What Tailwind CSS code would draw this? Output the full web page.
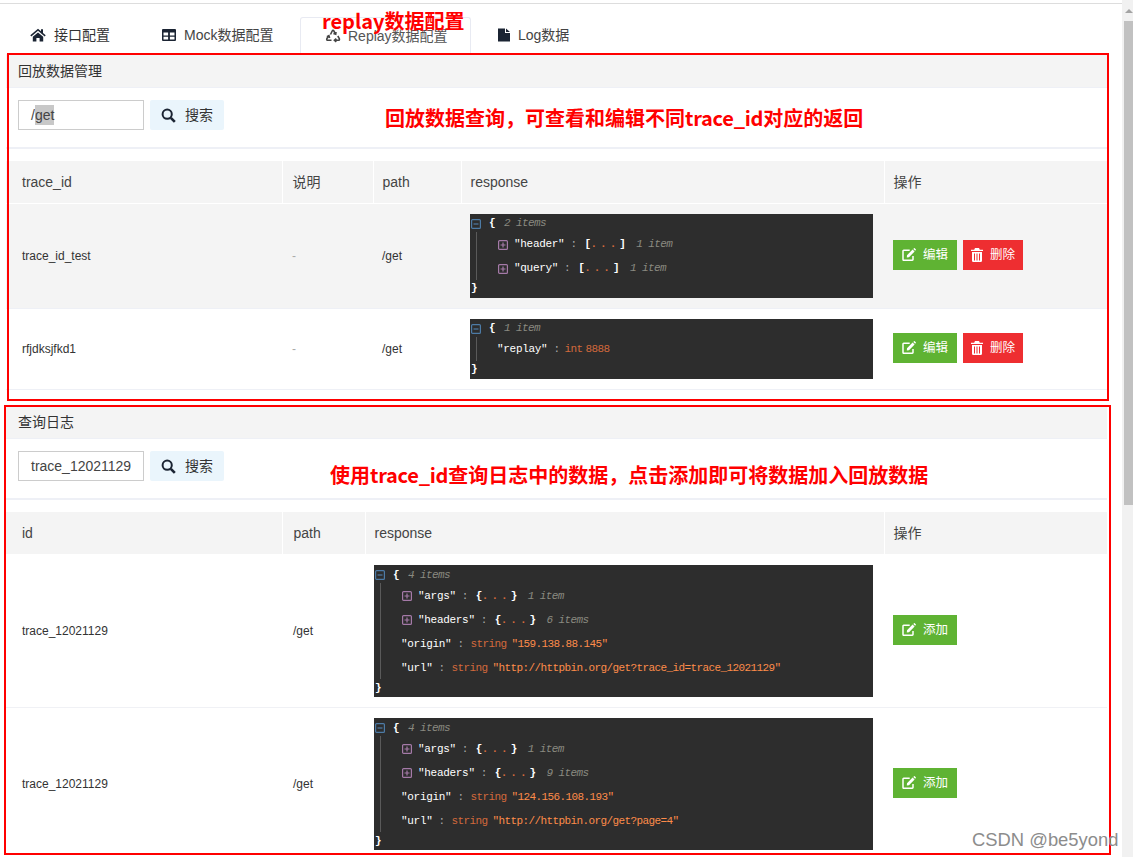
<!DOCTYPE html>
<html lang="en">
<head>
    <meta charset="UTF-8">
    <title>Replay数据配置</title>
    <script src="https://cdn.jsdelivr.net/npm/@tailwindcss/browser@4"></script>
</head>
<body class="relative w-[1133px] h-[857px] overflow-hidden bg-white text-[#333] font-['Liberation_Sans','Noto_Sans_CJK_SC',sans-serif]">

    <div class="flex h-full">
        <!-- Page -->
        <div class="w-[1122px] pt-[3px] pl-[6px] pr-[15px]">
            <div class="h-px -ml-[6px] -mr-[15px] bg-[#ddd]"></div>

            <!-- Tabs -->
            <div class="flex gap-[3px] pt-[13px] text-sm whitespace-nowrap">
                <div class="h-9 w-[129px] pl-6 flex items-center gap-2 text-[#333]">
                    <svg class="w-4 h-4 shrink-0 text-[#1b2433]" viewBox="0 0 16 14"><path fill="currentColor" d="M8 .8.3 7.2l1 1.2L8 2.800l6.700 5.600 1-1.200L13 5V1.300h-2v2zM2.800 8.800 8 4.500l5.200 4.300v4.700H9.600V10H6.400v3.500H2.800z"/></svg>
                    <span>接口配置</span>
                </div>
                <div class="h-9 w-[159px] pl-6 flex items-center gap-2 text-[#444]">
                    <svg class="w-[14px] h-[14px] shrink-0" viewBox="0 0 14 14"><path fill="#1b2433" fill-rule="evenodd" d="M1 1h12a1 1 0 0 1 1 1v10a1 1 0 0 1-1 1H1a1 1 0 0 1-1-1V2a1 1 0 0 1 1-1zM1.500 4.600v2.900h4.600V4.600zm6.400 0v2.900h4.600V4.600zM1.500 8.700v2.800h4.600V8.700zm6.400 0v2.800h4.600V8.700z"/></svg>
                    <span>Mock数据配置</span>
                </div>
                <div class="h-9 w-[171px] pl-6 flex items-center gap-[7px] bg-white border border-b-0 border-[#e8eaf2] rounded-t-[3px] text-[#555]">
                    <svg class="w-4 h-4 shrink-0" viewBox="0 0 16 16" fill="none" stroke="#444" stroke-width="1.6"><path d="M5.500 6.500 7.200 3c.4-.8 1.300-.8 1.700 0l1.600 2.800M11 3.800l-.3 2.400-2.300-.6M12.800 8l1.500 2.700c.4.8 0 1.600-.9 1.600h-3M11.300 10.600l-1.900 1.700 1.900 1.600M6.500 12.300H2.800c-.9 0-1.300-.8-.9-1.600L3.400 8M1.900 8.700l2-1 .7 2.300"/></svg>
                    <span>Replay数据配置</span>
                </div>
                <div class="h-9 pl-6 flex items-center gap-2 text-[#444]">
                    <svg class="w-3 h-[14px] shrink-0" viewBox="0 0 12 14"><path fill="#1b2433" d="M0 .5h7V5h5v8.500H0zM8 .5 12 4H8z"/></svg>
                    <span>Log数据</span>
                </div>
            </div>

            <!-- Replay data panel -->
            <section class="mt-px h-[336px]">
                <div class="h-[34px] flex items-center pl-3 bg-[#f4f4f4] border-b border-[#eef0f6] text-sm text-[#333]">回放数据管理</div>
                <div class="h-[61px] flex items-start gap-[6px] pl-3 pt-3 border-b-2 border-[#eef0f6]">
                    <div class="w-[126px] h-[30px] border border-[#ccc] pl-3 flex items-center text-sm text-[#444]">/<span class="bg-[#c8c8c8]">get</span></div>
                    <div class="w-[74px] h-[30px] rounded-[2px] bg-[#eaf5fc] flex items-center gap-[9px] pl-[11px] text-sm">
                        <svg class="w-[15px] h-[15px]" viewBox="0 0 15 15" fill="none" stroke="#1b2433"><circle cx="6.200" cy="6.200" r="4.600" stroke-width="2"/><path d="m9.800 9.800 4 4" stroke-width="2.600"/></svg>
                        <span>搜索</span>
                    </div>
                </div>
                <table class="mt-3 w-full table-fixed text-[12px]">
                    <colgroup><col class="w-[276px]"><col class="w-[91px]"><col class="w-[88px]"><col class="w-[423px]"><col></colgroup>
                    <thead>
                        <tr class="h-[42px] bg-[#f4f4f4] text-left text-sm text-[#444]">
                            <th class="pl-4 font-normal border-r border-white">trace_id</th>
                            <th class="pl-[10px] font-normal border-r border-white">说明</th>
                            <th class="pl-[9px] font-normal border-r border-white">path</th>
                            <th class="pl-[9px] font-normal border-r border-white">response</th>
                            <th class="pl-[9px] font-normal">操作</th>
                        </tr>
                    </thead>
                    <tbody>
                        <tr class="h-[105px] bg-[#f4f4f4] border-t border-white border-b border-b-[#eef0f6]">
                            <td class="pl-4">trace_id_test</td>
                            <td class="pl-[10px] text-[#aaa]">-</td>
                            <td class="pl-[9px]">/get</td>
                            <td class="pl-[9px]">
                                <div class="relative w-[403px] h-[84px] bg-[#2d2d2d] font-['Liberation_Mono',monospace] text-[11px] tracking-[-0.6px] text-white">
                                    <div class="absolute left-[6px] top-[18px] w-px h-[48px] bg-[#5a5a5a]"></div>
                                    <div class="h-[18px] pt-[2px] flex items-center pl-px"><svg class="w-[10px] h-[10px]" viewBox="0 0 10 10" fill="none" stroke="#4d7ba6" stroke-width="1.200"><rect x=".6" y=".6" width="8.800" height="8.800" rx="1"/><path d="M2.500 5h5"/></svg><b class="ml-2">{</b><i class="ml-[9px] text-[#8a8a80]">2 items</i></div>
                                    <div class="h-6 pt-[2px] flex items-center pl-7"><svg class="w-[10px] h-[10px]" viewBox="0 0 10 10" fill="none" stroke="#a57aa8" stroke-width="1.200"><rect x=".6" y=".6" width="8.800" height="8.800" rx="1"/><path d="M2.500 5h5M5 2.500v5"/></svg><span class="ml-[6px] tracking-[-0.3px]">"header"</span><span class="ml-[6px] text-[#aaa]">:</span><b class="ml-2">[</b><b class="text-[#d2693c] tracking-[3px]">...</b><b>]</b><i class="ml-[11px] text-[#8a8a80]">1 item</i></div>
                                    <div class="h-6 pt-[2px] flex items-center pl-7"><svg class="w-[10px] h-[10px]" viewBox="0 0 10 10" fill="none" stroke="#a57aa8" stroke-width="1.200"><rect x=".6" y=".6" width="8.800" height="8.800" rx="1"/><path d="M2.500 5h5M5 2.500v5"/></svg><span class="ml-[6px] tracking-[-0.3px]">"query"</span><span class="ml-[6px] text-[#aaa]">:</span><b class="ml-2">[</b><b class="text-[#d2693c] tracking-[3px]">...</b><b>]</b><i class="ml-[11px] text-[#8a8a80]">1 item</i></div>
                                    <div class="h-[18px] flex items-center pl-px"><b>}</b></div>
                                </div>
                            </td>
                            <td class="pl-[9px]">
                                <div class="-mt-px flex gap-[6px] text-white text-[12.5px]">
                                    <div class="w-16 h-[30px] bg-[#5fb333] flex items-center gap-[7px] pl-[9px]"><svg class="w-[14px] h-[14px]" viewBox="0 0 14 14"><path fill="none" stroke="#fff" stroke-width="1.500" d="M11 8v3.600c0 .4-.3.7-.7.7H1.700a.7.7 0 0 1-.7-.7V3c0-.4.3-.7.7-.7h6"/><path fill="#fff" d="m5 7.200 5.600-5.600 2 2L7 9.200l-2.200.2zM11.300.9l.7-.7c.2-.2.500-.2.700 0l1.100 1.100c.2.2.2.500 0 .700l-.7.7z"/></svg><span>编辑</span></div>
                                    <div class="w-[60px] h-[30px] bg-[#ee2e31] flex items-center gap-[7px] pl-2"><svg class="w-[12px] h-[14px]" viewBox="0 0 12 14"><path fill="#fff" fill-rule="evenodd" d="M4 0h4l.8 1.800H12V3H0V1.800h3.200zM1 4h10v8.800c0 .7-.4 1.200-1 1.200H2c-.6 0-1-.5-1-1.200zm2 1.500v7h1v-7zm2.500 0v7h1v-7zm2.500 0v7h1v-7z"/></svg><span>删除</span></div>
                                </div>
                            </td>
                        </tr>
                        <tr class="h-[81px] border-b border-[#eef0f6]">
                            <td class="pl-4">rfjdksjfkd1</td>
                            <td class="pl-[10px] text-[#aaa]">-</td>
                            <td class="pl-[9px]">/get</td>
                            <td class="pl-[9px]">
                                <div class="relative w-[403px] h-[60px] bg-[#2d2d2d] font-['Liberation_Mono',monospace] text-[11px] tracking-[-0.6px] text-white">
                                    <div class="absolute left-[6px] top-[18px] w-px h-6 bg-[#5a5a5a]"></div>
                                    <div class="h-[18px] pt-[2px] flex items-center pl-px"><svg class="w-[10px] h-[10px]" viewBox="0 0 10 10" fill="none" stroke="#4d7ba6" stroke-width="1.200"><rect x=".6" y=".6" width="8.800" height="8.800" rx="1"/><path d="M2.500 5h5"/></svg><b class="ml-2">{</b><i class="ml-[9px] text-[#8a8a80]">1 item</i></div>
                                    <div class="h-6 pt-[2px] flex items-center pl-[27px]"><span class="tracking-[-0.3px]">"replay"</span><span class="ml-[6px] text-[#aaa]">:</span><span class="ml-[5px] text-[#d2693c]">int</span><span class="ml-[3px] text-[#d2693c]">8888</span></div>
                                    <div class="h-[18px] flex items-center pl-px"><b>}</b></div>
                                </div>
                            </td>
                            <td class="pl-[9px]">
                                <div class="-mt-px flex gap-[6px] text-white text-[12.5px]">
                                    <div class="w-16 h-[30px] bg-[#5fb333] flex items-center gap-[7px] pl-[9px]"><svg class="w-[14px] h-[14px]" viewBox="0 0 14 14"><path fill="none" stroke="#fff" stroke-width="1.500" d="M11 8v3.600c0 .4-.3.7-.7.7H1.700a.7.7 0 0 1-.7-.7V3c0-.4.3-.7.7-.7h6"/><path fill="#fff" d="m5 7.200 5.600-5.600 2 2L7 9.200l-2.200.2zM11.300.9l.7-.7c.2-.2.500-.2.700 0l1.100 1.100c.2.2.2.500 0 .700l-.7.7z"/></svg><span>编辑</span></div>
                                    <div class="w-[60px] h-[30px] bg-[#ee2e31] flex items-center gap-[7px] pl-2"><svg class="w-[12px] h-[14px]" viewBox="0 0 12 14"><path fill="#fff" fill-rule="evenodd" d="M4 0h4l.8 1.800H12V3H0V1.800h3.200zM1 4h10v8.800c0 .7-.4 1.200-1 1.200H2c-.6 0-1-.5-1-1.200zm2 1.500v7h1v-7zm2.500 0v7h1v-7zm2.500 0v7h1v-7z"/></svg><span>删除</span></div>
                                </div>
                            </td>
                        </tr>
                    </tbody>
                </table>
            </section>

            <!-- Log query panel -->
            <section class="mt-4">
                <div class="h-[33px] flex items-center pl-3 bg-[#f4f4f4] border-b border-[#eef0f6] text-sm text-[#333]">查询日志</div>
                <div class="h-[61px] flex items-start gap-[6px] pl-3 pt-3 border-b-2 border-[#eef0f6]">
                    <div class="w-[126px] h-[30px] border border-[#ccc] pl-3 flex items-center text-sm text-[#444]">trace_12021129</div>
                    <div class="w-[74px] h-[30px] rounded-[2px] bg-[#eaf5fc] flex items-center gap-[9px] pl-[11px] text-sm">
                        <svg class="w-[15px] h-[15px]" viewBox="0 0 15 15" fill="none" stroke="#1b2433"><circle cx="6.200" cy="6.200" r="4.600" stroke-width="2"/><path d="m9.800 9.800 4 4" stroke-width="2.600"/></svg>
                        <span>搜索</span>
                    </div>
                </div>
                <table class="mt-3 w-full table-fixed text-[12px]">
                    <colgroup><col class="w-[276px]"><col class="w-[83px]"><col class="w-[519px]"><col></colgroup>
                    <thead>
                        <tr class="h-[42px] bg-[#f4f4f4] text-left text-sm text-[#444]">
                            <th class="pl-4 font-normal border-r border-white">id</th>
                            <th class="pl-[11px] font-normal border-r border-white">path</th>
                            <th class="pl-[9px] font-normal border-r border-white">response</th>
                            <th class="pl-[9px] font-normal">操作</th>
                        </tr>
                    </thead>
                    <tbody>
                        <tr class="h-[153px] border-b border-[#f0f1f5]">
                            <td class="pl-4 pt-[2px]">trace_12021129</td>
                            <td class="pl-[11px] pt-[2px]">/get</td>
                            <td class="pl-[9px] pt-[2px]">
                                <div class="relative w-[499px] h-[132px] bg-[#2d2d2d] font-['Liberation_Mono',monospace] text-[11px] tracking-[-0.6px] text-white">
                                    <div class="absolute left-[6px] top-[18px] w-px h-24 bg-[#5a5a5a]"></div>
                                    <div class="h-[18px] pt-[2px] flex items-center pl-px"><svg class="w-[10px] h-[10px]" viewBox="0 0 10 10" fill="none" stroke="#4d7ba6" stroke-width="1.200"><rect x=".6" y=".6" width="8.800" height="8.800" rx="1"/><path d="M2.500 5h5"/></svg><b class="ml-2">{</b><i class="ml-[9px] text-[#8a8a80]">4 items</i></div>
                                    <div class="h-6 pt-[2px] flex items-center pl-7"><svg class="w-[10px] h-[10px]" viewBox="0 0 10 10" fill="none" stroke="#a57aa8" stroke-width="1.200"><rect x=".6" y=".6" width="8.800" height="8.800" rx="1"/><path d="M2.500 5h5M5 2.500v5"/></svg><span class="ml-[6px] tracking-[-0.3px]">"args"</span><span class="ml-[6px] text-[#aaa]">:</span><b class="ml-2">{</b><b class="text-[#d2693c] tracking-[3px]">...</b><b>}</b><i class="ml-[11px] text-[#8a8a80]">1 item</i></div>
                                    <div class="h-6 pt-[2px] flex items-center pl-7"><svg class="w-[10px] h-[10px]" viewBox="0 0 10 10" fill="none" stroke="#a57aa8" stroke-width="1.200"><rect x=".6" y=".6" width="8.800" height="8.800" rx="1"/><path d="M2.500 5h5M5 2.500v5"/></svg><span class="ml-[6px] tracking-[-0.3px]">"headers"</span><span class="ml-[6px] text-[#aaa]">:</span><b class="ml-2">{</b><b class="text-[#d2693c] tracking-[3px]">...</b><b>}</b><i class="ml-[11px] text-[#8a8a80]">6 items</i></div>
                                    <div class="h-6 pt-[2px] flex items-center pl-[27px]"><span class="tracking-[-0.3px]">"origin"</span><span class="ml-[6px] text-[#aaa]">:</span><span class="ml-[7px] text-[#d2693c]">string</span><span class="ml-[5px] text-[#fd8c4a]">"159.138.88.145"</span></div>
                                    <div class="h-6 pt-[2px] flex items-center pl-[27px]"><span class="tracking-[-0.3px]">"url"</span><span class="ml-[6px] text-[#aaa]">:</span><span class="ml-[7px] text-[#d2693c]">string</span><span class="ml-[5px] text-[#fd8c4a]">"http://httpbin.org/get?trace_id=trace_12021129"</span></div>
                                    <div class="h-[18px] flex items-center pl-px"><b>}</b></div>
                                </div>
                            </td>
                            <td class="pl-[9px]">
                                <div class="w-16 h-[30px] bg-[#5fb333] flex items-center gap-[7px] pl-[9px] text-white text-[12.5px]"><svg class="w-[14px] h-[14px]" viewBox="0 0 14 14"><path fill="none" stroke="#fff" stroke-width="1.500" d="M11 8v3.600c0 .4-.3.7-.7.7H1.700a.7.7 0 0 1-.7-.7V3c0-.4.3-.7.7-.7h6"/><path fill="#fff" d="m5 7.200 5.600-5.600 2 2L7 9.200l-2.200.2zM11.300.9l.7-.7c.2-.2.500-.2.700 0l1.100 1.100c.2.2.2.500 0 .700l-.7.7z"/></svg><span>添加</span></div>
                            </td>
                        </tr>
                        <tr class="h-[153px]">
                            <td class="pl-4">trace_12021129</td>
                            <td class="pl-[11px]">/get</td>
                            <td class="pl-[9px]">
                                <div class="relative w-[499px] h-[132px] bg-[#2d2d2d] font-['Liberation_Mono',monospace] text-[11px] tracking-[-0.6px] text-white">
                                    <div class="absolute left-[6px] top-[18px] w-px h-24 bg-[#5a5a5a]"></div>
                                    <div class="h-[18px] pt-[2px] flex items-center pl-px"><svg class="w-[10px] h-[10px]" viewBox="0 0 10 10" fill="none" stroke="#4d7ba6" stroke-width="1.200"><rect x=".6" y=".6" width="8.800" height="8.800" rx="1"/><path d="M2.500 5h5"/></svg><b class="ml-2">{</b><i class="ml-[9px] text-[#8a8a80]">4 items</i></div>
                                    <div class="h-6 pt-[2px] flex items-center pl-7"><svg class="w-[10px] h-[10px]" viewBox="0 0 10 10" fill="none" stroke="#a57aa8" stroke-width="1.200"><rect x=".6" y=".6" width="8.800" height="8.800" rx="1"/><path d="M2.500 5h5M5 2.500v5"/></svg><span class="ml-[6px] tracking-[-0.3px]">"args"</span><span class="ml-[6px] text-[#aaa]">:</span><b class="ml-2">{</b><b class="text-[#d2693c] tracking-[3px]">...</b><b>}</b><i class="ml-[11px] text-[#8a8a80]">1 item</i></div>
                                    <div class="h-6 pt-[2px] flex items-center pl-7"><svg class="w-[10px] h-[10px]" viewBox="0 0 10 10" fill="none" stroke="#a57aa8" stroke-width="1.200"><rect x=".6" y=".6" width="8.800" height="8.800" rx="1"/><path d="M2.500 5h5M5 2.500v5"/></svg><span class="ml-[6px] tracking-[-0.3px]">"headers"</span><span class="ml-[6px] text-[#aaa]">:</span><b class="ml-2">{</b><b class="text-[#d2693c] tracking-[3px]">...</b><b>}</b><i class="ml-[11px] text-[#8a8a80]">9 items</i></div>
                                    <div class="h-6 pt-[2px] flex items-center pl-[27px]"><span class="tracking-[-0.3px]">"origin"</span><span class="ml-[6px] text-[#aaa]">:</span><span class="ml-[7px] text-[#d2693c]">string</span><span class="ml-[5px] text-[#fd8c4a]">"124.156.108.193"</span></div>
                                    <div class="h-6 pt-[2px] flex items-center pl-[27px]"><span class="tracking-[-0.3px]">"url"</span><span class="ml-[6px] text-[#aaa]">:</span><span class="ml-[7px] text-[#d2693c]">string</span><span class="ml-[5px] text-[#fd8c4a]">"http://httpbin.org/get?page=4"</span></div>
                                    <div class="h-[18px] flex items-center pl-px"><b>}</b></div>
                                </div>
                            </td>
                            <td class="pl-[9px]">
                                <div class="-mt-px w-16 h-[30px] bg-[#5fb333] flex items-center gap-[7px] pl-[9px] text-white text-[12.5px]"><svg class="w-[14px] h-[14px]" viewBox="0 0 14 14"><path fill="none" stroke="#fff" stroke-width="1.500" d="M11 8v3.600c0 .4-.3.7-.7.7H1.700a.7.7 0 0 1-.7-.7V3c0-.4.3-.7.7-.7h6"/><path fill="#fff" d="m5 7.200 5.600-5.600 2 2L7 9.200l-2.200.2zM11.300.9l.7-.7c.2-.2.500-.2.700 0l1.100 1.100c.2.2.2.500 0 .700l-.7.7z"/></svg><span>添加</span></div>
                            </td>
                        </tr>
                    </tbody>
                </table>
            </section>
        </div>

        <!-- Scrollbar -->
        <div class="w-[11px] h-full bg-[#f1f1f1] pl-[2px]">
            <div class="h-[21px] flex items-center justify-center"><span class="w-0 h-0 border-x-[4px] border-x-transparent border-b-[4px] border-b-[#a3a3a3]"></span></div>
            <div class="h-[484px] bg-[#c1c1c1]"></div>
        </div>
    </div>

    <!-- Red annotations drawn over the page -->
    <div class="absolute left-[7px] top-[53px] w-[1102px] h-[348px] border-2 border-[#ff0000]"></div>
    <div class="absolute left-[4px] top-[405px] w-[1107px] h-[450px] border-2 border-[#ff0000]"></div>
    <div class="absolute left-[322px] top-[6px] text-[20px] font-bold text-[#ff0000] font-['Noto_Sans_CJK_SC',sans-serif]">replay数据配置</div>
    <div class="absolute left-[385px] top-[103px] text-[20px] font-bold text-[#ff0000] font-['Noto_Sans_CJK_SC',sans-serif]">回放数据查询，可查看和编辑不同<span class="tracking-[-0.25px]">trace_id</span>对应的返回</div>
    <div class="absolute left-[330px] top-[460px] text-[20px] font-bold text-[#ff0000] font-['Noto_Sans_CJK_SC',sans-serif]">使用<span class="tracking-[-0.25px]">trace_id</span>查询日志中的数据，点击添加即可将数据加入回放数据</div>
    <div class="absolute left-[972px] top-[826px] text-[18.4px] text-[#8c8c8c]">CSDN @be5yond</div>
</body>
</html>
